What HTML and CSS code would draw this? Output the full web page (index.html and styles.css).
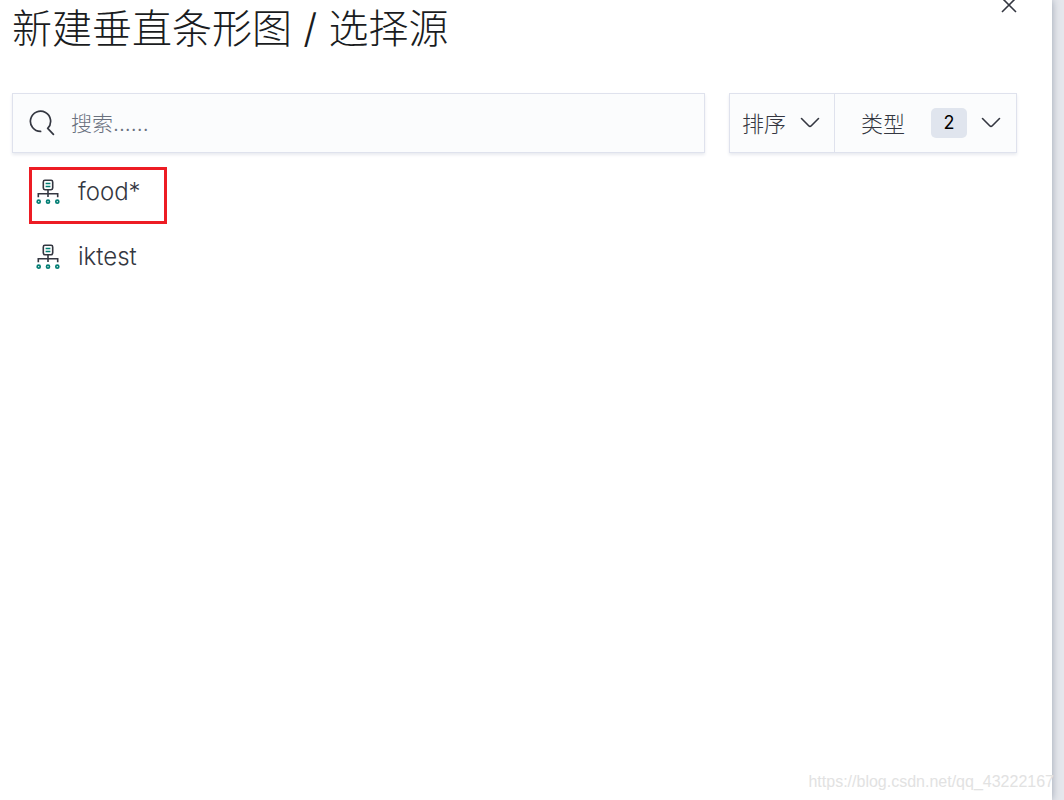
FILE: index.html
```html
<!DOCTYPE html>
<html lang="zh-CN">
<head>
  <meta charset="UTF-8">
  <meta name="viewport" content="width=device-width, initial-scale=1.0">
  <title>新建垂直条形图 / 选择源</title>
  <link rel="stylesheet" href="styles.css">
</head>
<body>
  <!-- 图标 -->
  <svg class="sprite" aria-hidden="true">
    <symbol id="icon-arrow" viewBox="0 0 20 12">
      <path d="M1.5 1.5 8.7 8.8Q10 10.1 11.3 8.8L18.5 1.5" fill="none" stroke="#343741" stroke-width="1.6" stroke-linecap="round"/>
    </symbol>
    <symbol id="icon-index" viewBox="0 0 24 26">
      <g fill="none" stroke="#343741" stroke-width="1.6">
        <rect x="7.3" y="1.3" width="9.4" height="9.4" rx="1.6"/>
        <path d="M12 11v7M2.3 18.2v-3.4h19.4v3.4"/>
      </g>
      <g fill="none" stroke="#017d73" stroke-width="1.7">
        <path d="M9.6 4.5h4.8M9.6 7.5h4.8"/>
        <circle cx="2.7" cy="22.7" r="1.5"/>
        <circle cx="12" cy="22.7" r="1.5"/>
        <circle cx="21.3" cy="22.7" r="1.5"/>
      </g>
    </symbol>
  </svg>

  <main class="modal">
    <header class="modal-header">
      <h1>新建垂直条形图 / 选择源</h1>
      <button class="close" type="button" aria-label="关闭">
        <svg width="16" height="16" viewBox="0 0 16 16">
          <path d="M1 1l14 14M15 1L1 15" fill="none" stroke="#343741" stroke-width="1.6"/>
        </svg>
      </button>
    </header>

    <!-- 搜索和筛选 -->
    <div class="toolbar">
      <label class="search">
        <svg width="26" height="26" viewBox="0 0 26 26">
          <path d="M11.6 21.4A10.1 10.1 0 1 1 18.7 18.4L24.4 24.4" fill="none" stroke="#343741" stroke-width="1.7" stroke-linecap="round" stroke-linejoin="round"/>
        </svg>
        <input type="search" placeholder="搜索......" aria-label="搜索">
      </label>
      <div class="filters">
        <button class="filter" type="button">
          <span class="label">排序</span>
          <svg width="20" height="12"><use href="#icon-arrow"/></svg>
        </button>
        <button class="filter filter-type" type="button">
          <span class="label">类型</span>
          <span class="badge">2</span>
          <svg width="20" height="12"><use href="#icon-arrow"/></svg>
        </button>
      </div>
    </div>

    <!-- 数据源列表 -->
    <ul class="sources">
      <li class="marked">
        <a href="#food"><svg width="24" height="26"><use href="#icon-index"/></svg>food*</a>
      </li>
      <li>
        <a href="#iktest"><svg width="24" height="26"><use href="#icon-index"/></svg>iktest</a>
      </li>
    </ul>
  </main>

  <div class="watermark">https://blog.csdn.net/qq_43222167</div>
</body>
</html>
```

FILE: styles.css
```css
* {
  box-sizing: border-box;
}

body {
  margin: 0;
  min-height: 100vh;
  padding-right: 12px;
  background-color: #e5e7ec;
  color: #343741;
  font-family: Inter, "Noto Sans CJK SC", sans-serif;
  font-size: 21px;
  overflow: hidden;
}

.sprite {
  display: none;
}

/* 弹窗 */
.modal {
  min-height: 100vh;
  padding: 0 35px 0 12px;
  background-color: #fff;
  box-shadow: 0 0 8px #9aa2b1;
}

.modal-header {
  display: flex;
  justify-content: space-between;
  align-items: flex-start;
  height: 93px;
}

h1 {
  margin: 0;
  color: #1a1c21;
  font-size: 40px;
  font-weight: 300;
  line-height: 58px;
}

button {
  border: 0;
  background: none;
  color: inherit;
  font: inherit;
  cursor: pointer;
}

.close {
  margin-top: -3px;
  padding: 0;
  line-height: 0;
}

/* 搜索栏 */
.toolbar {
  display: flex;
  gap: 24px;
}

.search,
.filters {
  display: flex;
  height: 60px;
  border: 1px solid #dfe2ed;
  background-color: #fbfcfd;
  box-shadow: 0 2px 3px #e9ebf0;
}

.search {
  flex: 1;
  align-items: center;
  gap: 16px;
  padding: 0 16px;
}

.search input {
  flex: 1;
  min-width: 0;
  padding: 0;
  border: 0;
  outline: 0;
  background: none;
  color: inherit;
  font: inherit;
  font-weight: 300;
}

.search input::placeholder {
  color: #69707d;
}

/* 筛选按钮 */
.filter {
  display: flex;
  align-items: center;
  gap: 14px;
  padding: 0 14px 0 12px;
  font-weight: 300;
}

.filter-type {
  padding: 0 15px 0 26px;
  border-left: 1px solid #dfe2ed;
}

.label {
  padding-bottom: 3px;
  font-size: 22px;
}

.badge {
  width: 36px;
  margin-left: 12px;
  border-radius: 5px;
  background-color: #e0e5ee;
  color: #000;
  font-size: 18px;
  font-weight: 400;
  line-height: 30px;
}

/* 列表 */
.sources {
  display: flex;
  flex-direction: column;
  align-items: flex-start;
  gap: 8px;
  margin: 14px 0 0 17px;
  padding: 0;
  list-style: none;
}

.sources li {
  border: 3px solid transparent;
}

.sources .marked {
  border-color: #ed1c24;
}

.sources a {
  display: flex;
  align-items: center;
  gap: 18px;
  height: 51px;
  padding: 0 23px 8px 4px;
  color: inherit;
  font-size: 24px;
  font-weight: 300;
  text-decoration: none;
}

.watermark {
  position: absolute;
  right: 10px;
  bottom: 8px;
  color: #e2e2e2;
  font-family: "Liberation Sans", Arial, sans-serif;
  font-size: 16px;
  line-height: 20px;
}
```
